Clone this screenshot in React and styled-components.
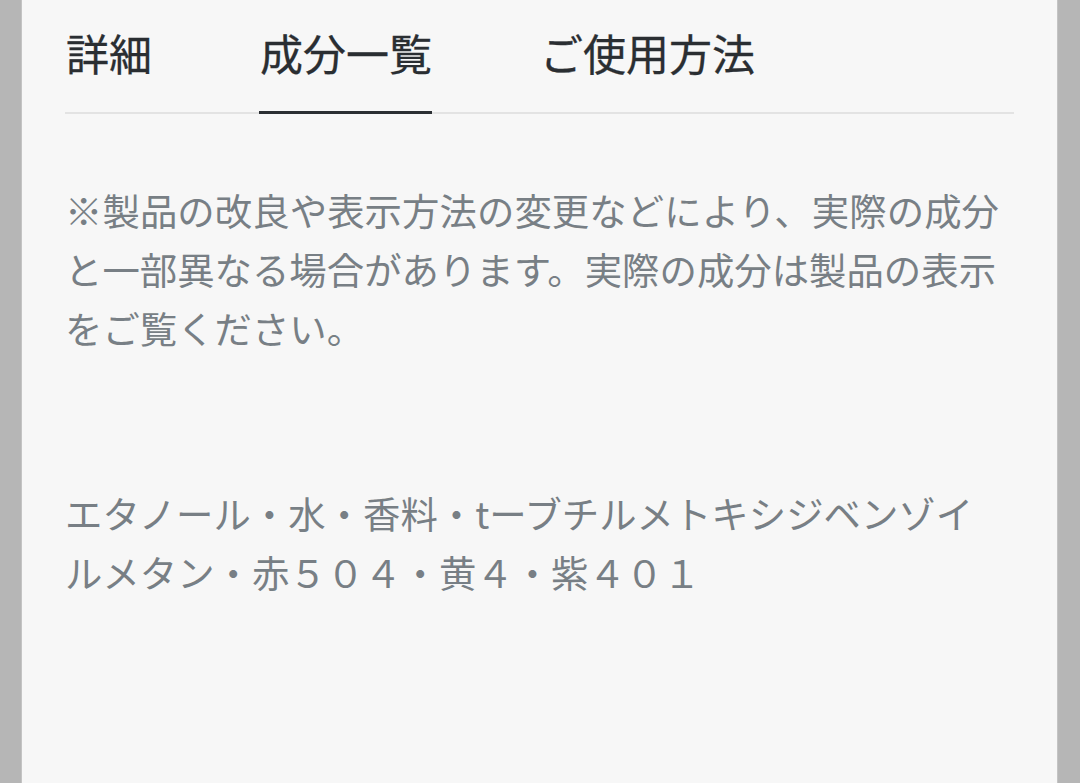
import React, { useState } from 'react';
import styled, { createGlobalStyle } from 'styled-components';

const GlobalStyle = createGlobalStyle`
  html, body {
    margin: 0;
    padding: 0;
    background: #b6b6b6;
  }
  body {
    font-family: "Noto Sans CJK JP", "Noto Sans", sans-serif;
    -webkit-font-smoothing: antialiased;
  }
`;

const tabs = ['詳細', '成分一覧', 'ご使用方法'];

const notice = [
  '※製品の改良や表示方法の変更などにより、実際の成分',
  'と一部異なる場合があります。実際の成分は製品の表示',
  'をご覧ください。',
];

const ingredients = [
  'エタノール・水・香料・tーブチルメトキシジベンゾイ',
  'ルメタン・赤５０４・黄４・紫４０１',
];

const App = () => {
  const [active, setActive] = useState(1);

  return (
    <>
      <GlobalStyle />
      <Page>
        <Panel>
          <TabBar>
            {tabs.map((label, i) => (
              <Tab key={label} $active={i === active} onClick={() => setActive(i)}>
                {label}
              </Tab>
            ))}
          </TabBar>
          <Body>
            <Paragraph>
              {notice.map((line, i) => (
                <Line key={i} $fill={i === 0}>{line}</Line>
              ))}
            </Paragraph>
            <Paragraph>
              {ingredients.map((line, i) => (
                <Line key={i}>{line}</Line>
              ))}
            </Paragraph>
          </Body>
        </Panel>
      </Page>
    </>
  );
};

const Page = styled.div`
  display: flex;
  justify-content: center;
  min-height: 783px;
  padding: 0 22px 0 21px;
  box-sizing: border-box;
`;

const Panel = styled.div`
  flex: 1;
  background: #f7f7f7;
  padding: 0 43px 0 43px;
  border-left: 1px solid #c4c4c4;
  border-right: 1px solid #c4c4c4;
`;

const TabBar = styled.div`
  display: flex;
  gap: 107px;
  padding-top: 20px;
  border-bottom: 2px solid #e3e3e3;
`;

const Tab = styled.div`
  font-size: 43px;
  font-weight: 400;
  line-height: 64px;
  color: #2a2e32;
  -webkit-text-stroke: 0.3px #2a2e32;
  padding: 0 0 27px 1px;
  margin-bottom: -2.5px;
  border-bottom: 3px solid ${p => (p.$active ? '#2b2f33' : 'transparent')};
  cursor: pointer;
`;

const Body = styled.div`
  display: flex;
  flex-direction: column;
  gap: 126px;
  padding-top: 67px;
`;

const Paragraph = styled.div`
  font-size: 37.4px;
  line-height: 59px;
  color: #787f85;
  width: 934px;
`;

const Line = styled.div`
  white-space: nowrap;
  text-align: ${p => (p.$fill ? 'justify' : 'left')};
  text-align-last: ${p => (p.$fill ? 'justify' : 'auto')};
`;

export default App;
